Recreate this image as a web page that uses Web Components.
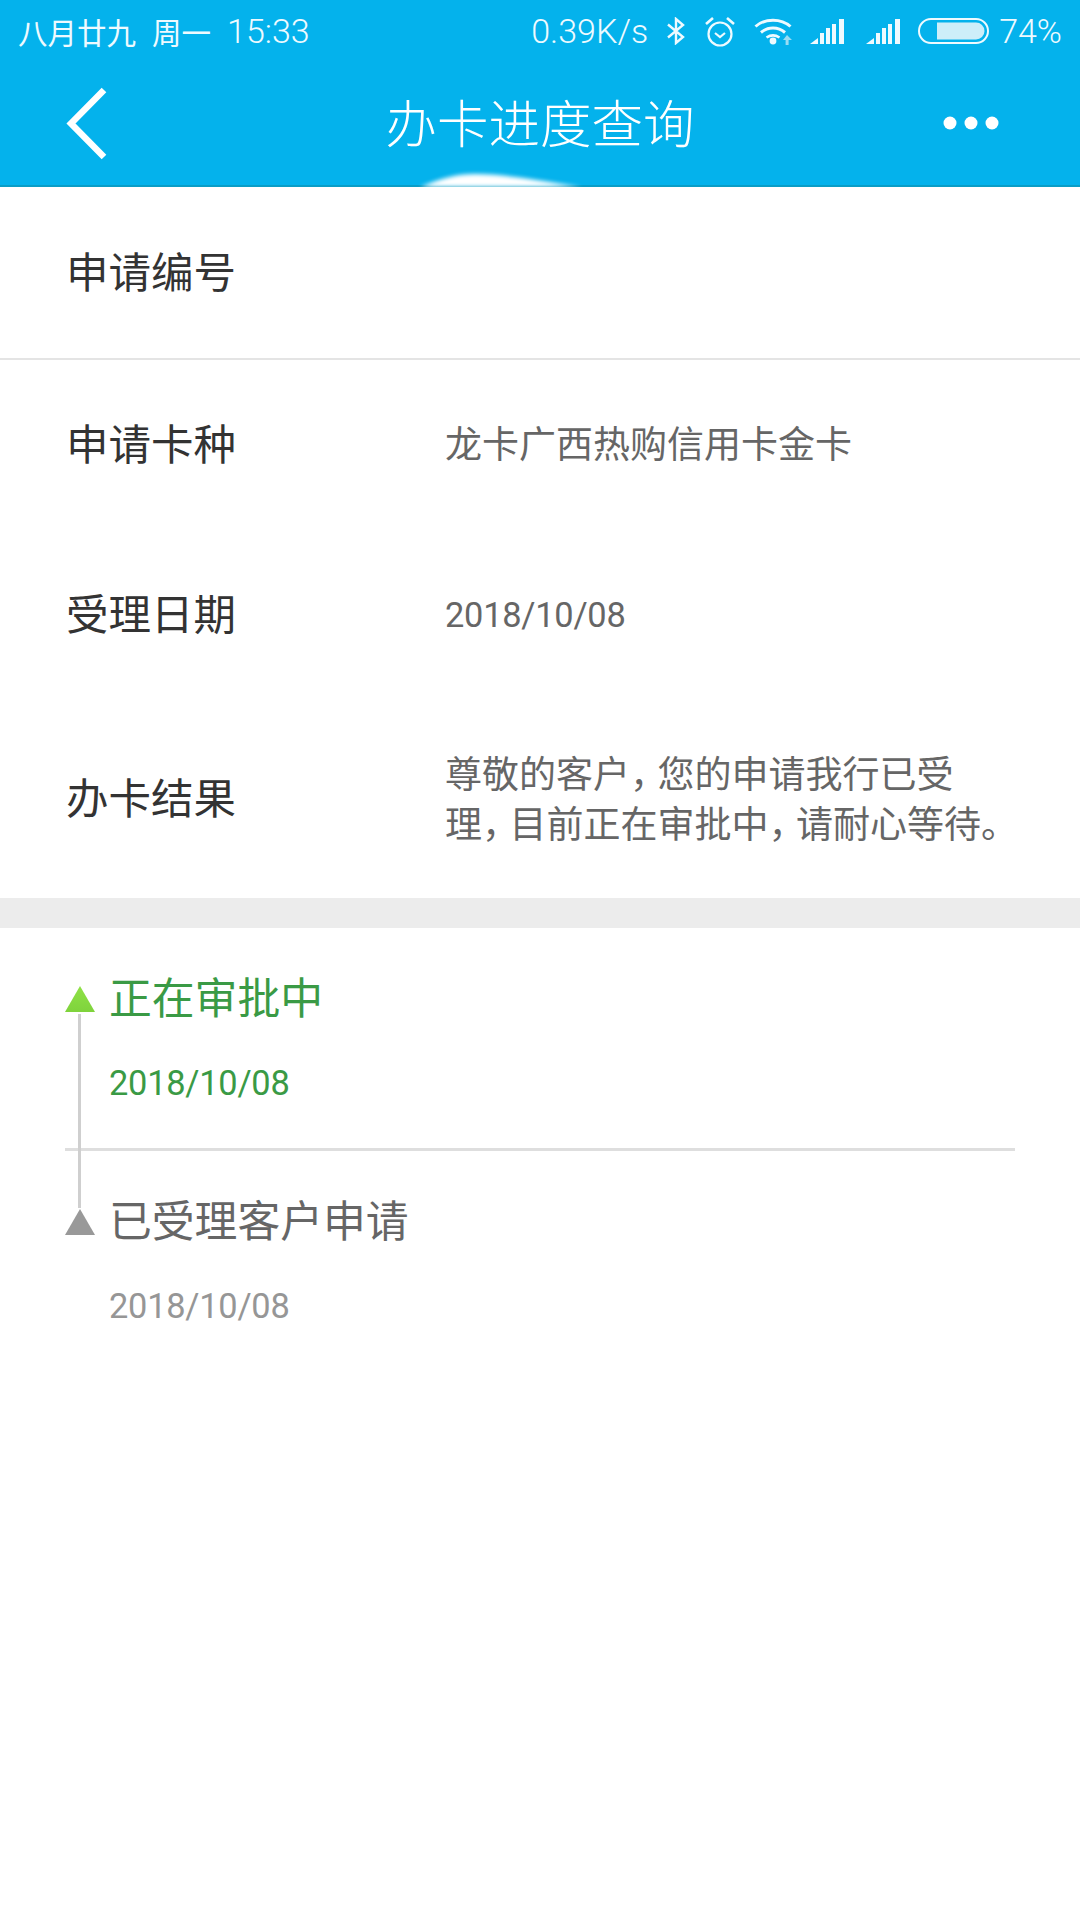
<!DOCTYPE html>
<html lang="zh">
<head>
<meta charset="utf-8">
<title>办卡进度查询</title>
<style>
  html, body { margin: 0; background: #fff; }
  body { font-family: Roboto, "Noto Sans CJK SC", sans-serif; width: 1080px; height: 1920px; overflow: hidden; }
  app-page { display: block; }
</style>
</head>
<body>
<app-page>
  <status-bar></status-bar>
  <nav-header>办卡进度查询</nav-header>
  <info-row label="申请编号" divider first></info-row>
  <info-row label="申请卡种">龙卡广西热购信用卡金卡</info-row>
  <info-row label="受理日期" numeric>2018/10/08</info-row>
  <info-row label="办卡结果" tall>尊敬的客户<span class="p">，</span>您的申请我行已受理<span class="p">，</span>目前正在审批中<span class="p">，</span>请耐心等待<span class="e">。</span></info-row>
  <section-gap></section-gap>
  <progress-list>
    <progress-step active date="2018/10/08" divider>正在审批中</progress-step>
    <progress-step date="2018/10/08">已受理客户申请</progress-step>
  </progress-list>
</app-page>

<template id="status-bar-tpl">
  <style>
    :host { display: flex; justify-content: space-between; align-items: center; height: 60px; padding: 2px 18px 0 18px; box-sizing: border-box; background: #04b2ec; color: #eefaff; font-size: 34px; font-weight: 300; }
    .side { display: flex; align-items: center; }
    .date { margin-right: 16px; }
    .cn { font-size: 29.500px; font-weight: 400; }
    svg { display: block; flex: none; }
    .speed { margin-right: 18px; }
    .bt, .alarm, .wifi { margin-right: 18px; }
    .wifi { margin-right: 17px; }
    .sig1 { margin-right: 18px; }
    .sig2 { margin-right: 14px; }
    .batt { margin-right: 10px; }
  </style>
  <div class="side">
    <span class="cn date">八月廿九</span><span class="cn date">周一</span><span>15:33</span>
  </div>
  <div class="side">
    <span class="speed">0.39K/s</span>
    <svg class="bt" width="20" height="28" viewBox="0 0 20 28" fill="none" stroke="#eefaff" stroke-width="2.400"><path d="M2 7.500 17 20 10 26V2l7 6L2 20.500"/></svg>
    <svg class="alarm" width="32" height="33" viewBox="0 0 32 33" fill="none" stroke="#eefaff" stroke-width="2.200"><circle cx="16" cy="19" r="11.500"/><path d="M11 18l5 4 5-4"/><path d="M2 9l7-6M30 9l-7-6" stroke-width="2.600"/></svg>
    <svg class="wifi" width="39" height="27" viewBox="0 0 39 27" fill="none" stroke="#eefaff" stroke-width="3"><path d="M1.500 8.500C11 0 27 0 36.500 8.500"/><path d="M7 14.500c7-6 17-6 24 0"/><circle cx="19" cy="23" r="3.400" fill="#eefaff" stroke="none"/><path d="M12.500 19.500c4-2.600 9-2.600 13 0" stroke-width="2.600"/><path d="M33 17l5 5h-3.400v5h-3v-5H29z" fill="#9adcf3" stroke="none"/></svg>
    <signal-bars class="sig1"></signal-bars>
    <signal-bars class="sig2"></signal-bars>
    <svg class="batt" width="71" height="26" viewBox="0 0 71 26"><rect x="1" y="1" width="69" height="24" rx="12" fill="none" stroke="#eefaff" stroke-width="2"/><path d="M19 4.500h39a8.500 8.500 0 0 1 0 17H19z" fill="#cdeef9"/></svg>
    <span>74%</span>
  </div>
</template>

<template id="signal-bars-tpl">
  <style>
    :host { display: block; width: 38px; height: 26px; }
    svg { display: block; }
  </style>
  <svg width="38" height="26" viewBox="0 0 38 26" fill="#eefaff"><path d="M0 26 8 20v6z"/><rect x="10" y="15" width="4" height="11"/><rect x="16" y="10" width="4" height="16"/><rect x="22" y="6" width="4" height="20"/><rect x="29" y="1" width="5" height="25"/></svg>
</template>

<template id="nav-header-tpl">
  <style>
    :host { display: grid; grid-template-columns: 1fr auto 1fr; align-items: center; position: relative; height: 125px; padding-bottom: 2px; background: #04b2ec; overflow: hidden; }
    .back { padding: 2px 0 0 65px; }
    .back svg, .more svg { display: block; }
    .title { color: #fff; font-family: "Noto Sans CJK SC", sans-serif; font-size: 51.500px; font-weight: 300; line-height: 60px; position: relative; top: -2px; }
    .more { justify-self: end; padding-right: 81px; }
    .rule { position: absolute; left: 0; right: 0; bottom: 0; height: 2px; background: #0a9dc6; }
    .glow { position: absolute; left: 410px; bottom: 0; width: 190px; height: 16px; filter: blur(2px); }
  </style>
  <div class="back">
    <svg width="44" height="74" viewBox="0 0 44 74" fill="none" stroke="#fff" stroke-width="6.500"><path d="M39 3 6 36.500 39 70"/></svg>
  </div>
  <div class="title"><slot></slot></div>
  <div class="more">
    <svg width="56" height="14" viewBox="0 0 56 14" fill="#fff"><circle cx="7" cy="7" r="6.500"/><circle cx="28" cy="7" r="6.500"/><circle cx="49" cy="7" r="6.500"/></svg>
  </div>
  <div class="rule"></div>
  <svg class="glow" viewBox="0 0 190 16" fill="#fff"><path d="M5 18C30 8 45 3 65 3c30 0 65 7 120 15z"/></svg>
</template>

<template id="info-row-tpl">
  <style>
    :host { display: flex; align-items: center; min-height: 170px; padding-left: 66px; box-sizing: border-box; background: #fff; font-family: "Noto Sans CJK SC", sans-serif; }
    :host([first]) { min-height: 171px; }
    :host([tall]) { min-height: 198px; }
    :host([divider]) { border-bottom: 2px solid #e4e4e4; min-height: 173px; }
    .label { flex: none; width: 379px; padding-bottom: 6px; color: #333; font-size: 42.500px; font-weight: 400; line-height: 50px; }
    .value { width: 565px; padding-bottom: 7px; color: #666; font-size: 37px; font-weight: 400; line-height: 50px; }
    :host([tall]) .value { padding-bottom: 4px; }
    :host([numeric]) .value { padding-bottom: 0; font-family: Roboto, sans-serif; font-size: 34.400px; letter-spacing: -0.250px; color: #666; }
    ::slotted(.p) { font-feature-settings: "halt"; letter-spacing: 9px; }
    ::slotted(.e) { font-feature-settings: "halt"; }
  </style>
  <div class="label"></div>
  <div class="value"><slot></slot></div>
</template>

<template id="section-gap-tpl">
  <style>
    :host { display: block; height: 30px; background: #ececec; }
  </style>
</template>

<template id="progress-list-tpl">
  <style>
    :host { display: block; position: relative; padding-left: 65px; padding-right: 65px; }
    .track { position: absolute; left: 78px; top: 86px; width: 3px; height: 194px; background: #cfcfcf; }
  </style>
  <slot></slot>
  <div class="track"></div>
</template>

<template id="progress-step-tpl">
  <style>
    :host { display: block; padding-top: 46px; color: #666; }
    :host([divider]) { border-bottom: 3px solid #dedede; padding-bottom: 40px; }
    .head { display: flex; align-items: center; gap: 14px; height: 50px; }
    .mark { flex: none; width: 30px; height: 26px; background: #999; clip-path: polygon(50% 0, 100% 100%, 0 100%); }
    .title { padding-bottom: 8px; font-family: "Noto Sans CJK SC", sans-serif; font-size: 42.800px; font-weight: 400; }
    .date { margin: 34px 0 0 44px; color: #969696; font-size: 34.400px; letter-spacing: -0.250px; font-weight: 400; line-height: 50px; }
    :host([active]) { color: #3a9a45; }
    :host([active]) .mark { background: linear-gradient(#8fe146, #7fd33c); }
    :host([active]) .date { color: #3a9a45; }
  </style>
  <div class="head"><span class="mark"></span><span class="title"><slot></slot></span></div>
  <div class="date"></div>
</template>

<script>
function shadowFrom(host, id) {
  const root = host.attachShadow({ mode: 'open' });
  root.appendChild(document.getElementById(id).content.cloneNode(true));
  return root;
}

class StatusBar extends HTMLElement {
  constructor() { super(); shadowFrom(this, 'status-bar-tpl'); }
}
class SignalBars extends HTMLElement {
  constructor() { super(); shadowFrom(this, 'signal-bars-tpl'); }
}
class NavHeader extends HTMLElement {
  constructor() { super(); shadowFrom(this, 'nav-header-tpl'); }
}
class InfoRow extends HTMLElement {
  constructor() { super(); this.$root = shadowFrom(this, 'info-row-tpl'); }
  connectedCallback() {
    this.$root.querySelector('.label').textContent = this.getAttribute('label');
  }
}
class SectionGap extends HTMLElement {
  constructor() { super(); shadowFrom(this, 'section-gap-tpl'); }
}
class ProgressList extends HTMLElement {
  constructor() { super(); shadowFrom(this, 'progress-list-tpl'); }
}
class ProgressStep extends HTMLElement {
  constructor() { super(); this.$root = shadowFrom(this, 'progress-step-tpl'); }
  connectedCallback() {
    this.$root.querySelector('.date').textContent = this.getAttribute('date');
  }
}

customElements.define('status-bar', StatusBar);
customElements.define('signal-bars', SignalBars);
customElements.define('nav-header', NavHeader);
customElements.define('info-row', InfoRow);
customElements.define('section-gap', SectionGap);
customElements.define('progress-list', ProgressList);
customElements.define('progress-step', ProgressStep);
</script>
</body>
</html>
